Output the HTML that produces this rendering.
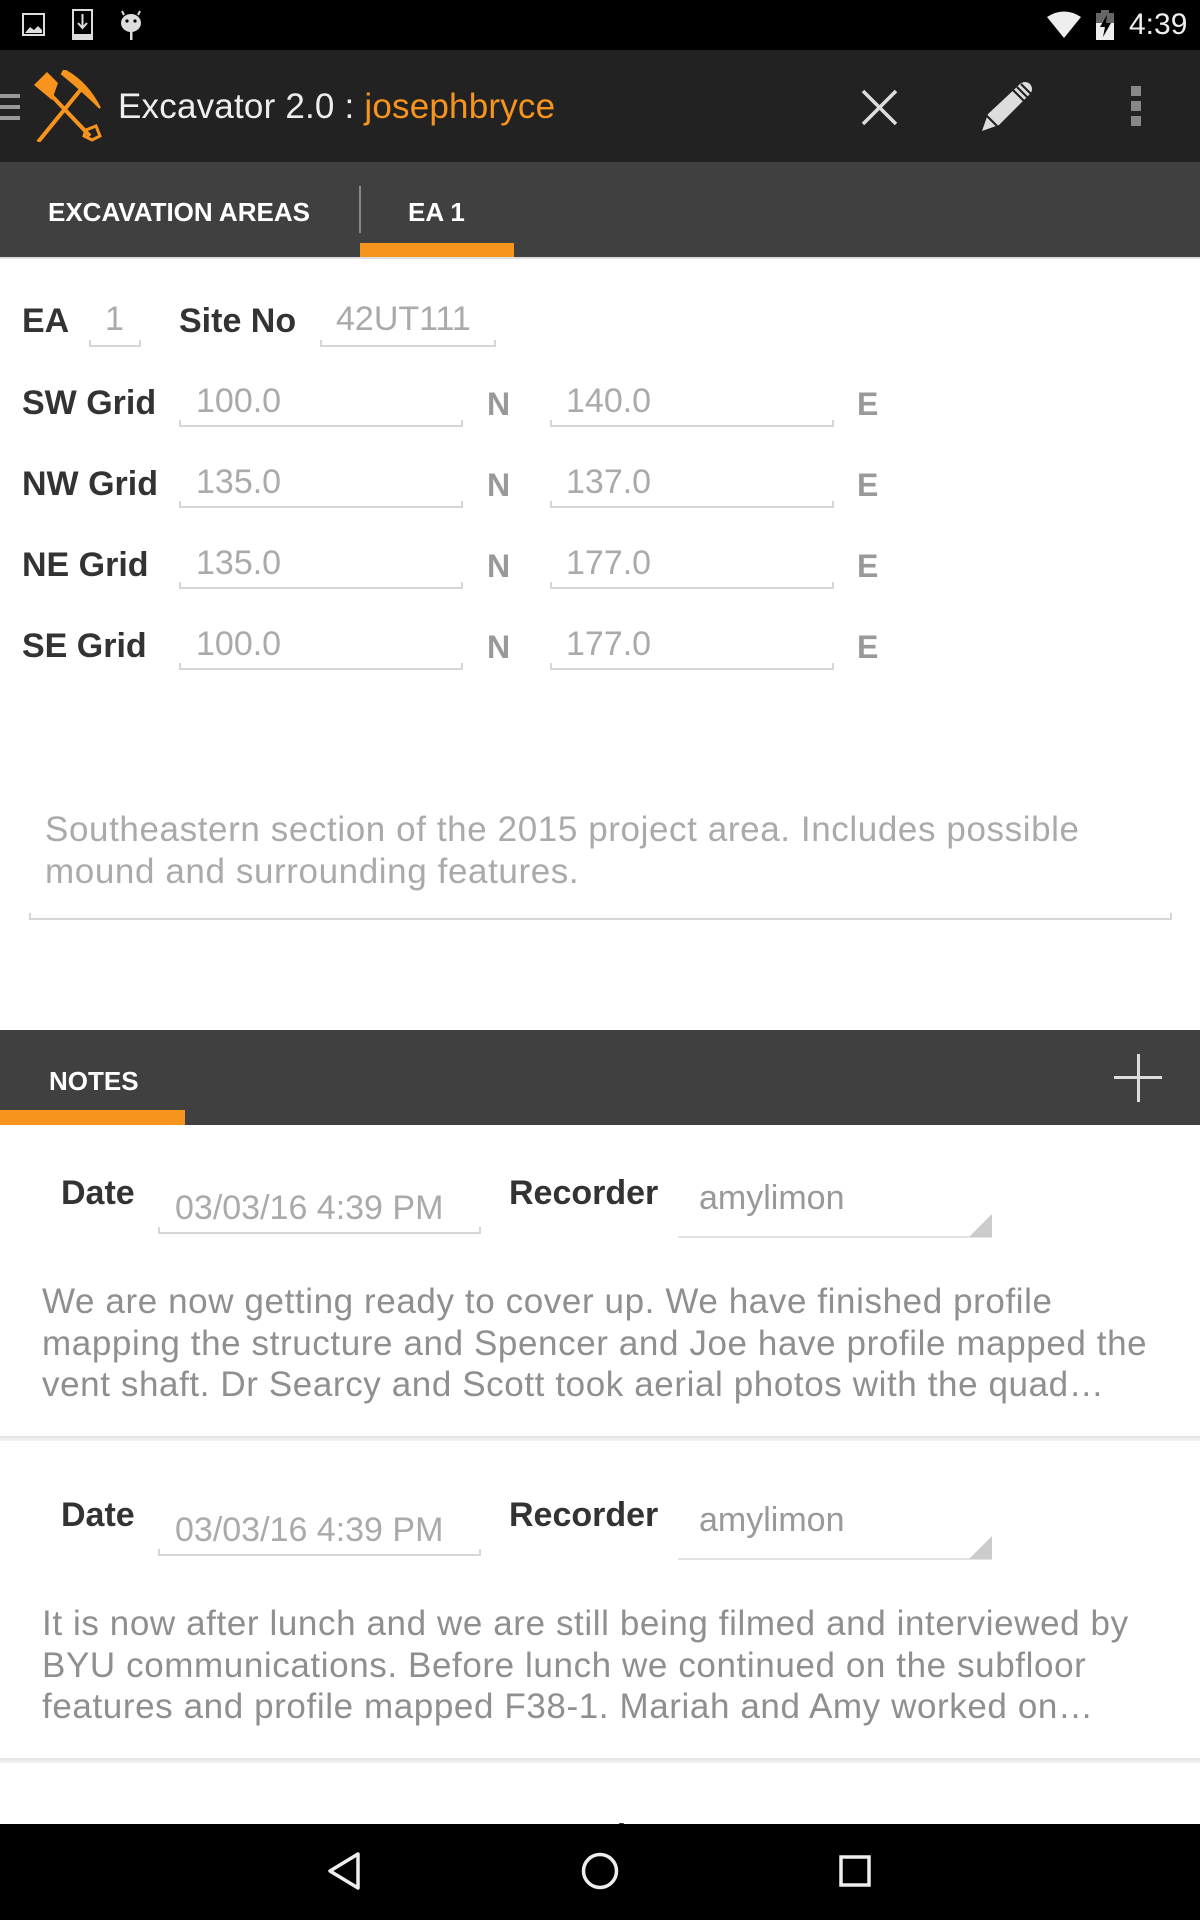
<!DOCTYPE html>
<html><head><meta charset="utf-8"><style>
*{margin:0;padding:0;box-sizing:border-box}
body{width:1200px;height:1920px;background:#fff;position:relative;overflow:hidden;font-family:"Liberation Sans",sans-serif}
.a{position:absolute;white-space:nowrap}
.lb{font-weight:bold;color:#333;font-size:34px;line-height:34px}
.v{color:#aaa;font-size:34px;line-height:34px}
.ne{font-weight:bold;color:#999;font-size:32px;line-height:32px}
.ul{position:absolute;height:2px;background:#d6d6d6}
.ul:before,.ul:after{content:"";position:absolute;bottom:0;width:2px;height:7px;background:#d6d6d6}
.ul:before{left:0}.ul:after{right:0}
.body{color:#8f8f8f;font-size:35px;line-height:41.6px;letter-spacing:0.6px}
</style></head><body>
<div class="a" style="left:0;top:0;width:1200px;height:50px;background:#000"></div>
<svg class="a" style="left:22px;top:13px" width="26" height="26" viewBox="0 0 26 26"><rect x="1" y="1" width="21" height="21" fill="none" stroke="#ddd" stroke-width="2"/><path d="M3 20 L8 14 L12 17 L16 13 L20 17 V20Z" fill="#ddd"/></svg>
<svg class="a" style="left:72px;top:9px" width="22" height="32" viewBox="0 0 22 32"><rect x="1" y="1" width="19" height="29" fill="none" stroke="#ddd" stroke-width="2"/><rect x="1" y="25" width="19" height="5" fill="#ddd"/><path d="M10.5 5 V18 M6 14 L10.5 19 L15 14" stroke="#ddd" stroke-width="2" fill="none"/></svg>
<svg class="a" style="left:118px;top:8px" width="26" height="34" viewBox="0 0 26 34"><ellipse cx="13" cy="15" rx="10" ry="9" fill="#ddd"/><path d="M6 7 L4 3 M20 7 L22 3" stroke="#ddd" stroke-width="2"/><rect x="12" y="23" width="2.5" height="9" fill="#ddd"/><circle cx="9" cy="13" r="1.6" fill="#000"/><circle cx="17" cy="13" r="1.6" fill="#000"/></svg>
<svg class="a" style="left:1046px;top:11px" width="36" height="28" viewBox="0 0 36 28"><path d="M1 6 Q18 -5 35 6 L18 27Z" fill="#eee"/></svg>
<svg class="a" style="left:1095px;top:10px" width="22" height="30" viewBox="0 0 22 30"><rect x="6" y="0" width="8" height="3" fill="#666"/><rect x="1" y="3" width="18" height="27" fill="#eee"/><rect x="1" y="3" width="18" height="10" fill="#666"/><path d="M12 5 L5 17 H10 L8 27 L16 13 H11Z" fill="#000"/></svg>
<div class="a" style="left:1129px;top:8px;font-size:30px;line-height:34px;color:#eee">4:39</div>
<div class="a" style="left:0;top:50px;width:1200px;height:112px;background:#222"></div>
<div class="a" style="left:0;top:94px;width:20px;height:4px;background:#999"></div>
<div class="a" style="left:0;top:105px;width:20px;height:4px;background:#999"></div>
<div class="a" style="left:0;top:116px;width:20px;height:4px;background:#999"></div>
<svg class="a" style="left:32px;top:70px" width="70" height="72" viewBox="0 0 70 72"><g fill="#f7941d" stroke="#f7941d"><path d="M2 15 L15 2 L26 13 L20 30 Z" stroke="none"/><path d="M19 25 L58 66" stroke-width="4" fill="none"/><path d="M54 60 L64 56 L68 66 L60 70 L52 66 Z" fill="none" stroke-width="3"/><path d="M6 72 L50 18" stroke-width="4" fill="none"/><path d="M32 0 Q55 12 68 38 Q52 22 30 4Z" stroke-width="2"/></g></svg>
<div class="a" style="left:118px;top:89px;font-size:35px;line-height:36px;color:#eee;letter-spacing:0.2px">Excavator 2.0 : <span style="color:#f7941d">josephbryce</span></div>
<svg class="a" style="left:861px;top:89px" width="37" height="37" viewBox="0 0 37 37"><path d="M2 2 L35 35 M35 2 L2 35" stroke="#ddd" stroke-width="3.5"/></svg>
<svg class="a" style="left:980px;top:78px" width="56" height="56" viewBox="0 0 56 56"><path d="M2 53 L8 36 L40 6 Q45 2 50 6 Q54 11 50 16 L19 47 Z" fill="#ddd"/><path d="M7 38 L17 48 M33 12 L44 23 M37 9 L48 20 M41 6 L51 16" stroke="#222" stroke-width="2.2"/></svg>
<div class="a" style="left:1131px;top:86px;width:10px;height:10px;background:#888"></div>
<div class="a" style="left:1131px;top:101px;width:10px;height:10px;background:#888"></div>
<div class="a" style="left:1131px;top:116px;width:10px;height:10px;background:#888"></div>
<div class="a" style="left:0;top:162px;width:1200px;height:95px;background:#404040"></div>
<div class="a" style="left:48px;top:199px;font-size:26px;font-weight:bold;color:#fff;line-height:26px">EXCAVATION AREAS</div>
<div class="a" style="left:359px;top:186px;width:2px;height:47px;background:#888"></div>
<div class="a" style="left:408px;top:199px;font-size:26px;font-weight:bold;color:#fff;line-height:26px">EA 1</div>
<div class="a" style="left:360px;top:243px;width:154px;height:14px;background:#f7941d"></div>
<div class="a" style="left:0;top:257px;width:1200px;height:2px;background:#ddd"></div>

<div class="a lb" style="left:22px;top:304px">EA</div>
<div class="a v" style="left:105px;top:302px">1</div>
<div class="ul" style="left:89px;top:345px;width:52px"></div>
<div class="a lb" style="left:179px;top:304px">Site No</div>
<div class="a v" style="left:336px;top:302px">42UT111</div>
<div class="ul" style="left:320px;top:345px;width:176px"></div>

<div class="a lb" style="left:22px;top:386px">SW Grid</div>
<div class="a v" style="left:196px;top:384px">100.0</div><div class="ul" style="left:179px;top:425px;width:284px"></div>
<div class="a ne" style="left:487px;top:388px">N</div>
<div class="a v" style="left:566px;top:384px">140.0</div><div class="ul" style="left:550px;top:425px;width:284px"></div>
<div class="a ne" style="left:857px;top:388px">E</div>

<div class="a lb" style="left:22px;top:467px">NW Grid</div>
<div class="a v" style="left:196px;top:465px">135.0</div><div class="ul" style="left:179px;top:506px;width:284px"></div>
<div class="a ne" style="left:487px;top:469px">N</div>
<div class="a v" style="left:566px;top:465px">137.0</div><div class="ul" style="left:550px;top:506px;width:284px"></div>
<div class="a ne" style="left:857px;top:469px">E</div>

<div class="a lb" style="left:22px;top:548px">NE Grid</div>
<div class="a v" style="left:196px;top:546px">135.0</div><div class="ul" style="left:179px;top:587px;width:284px"></div>
<div class="a ne" style="left:487px;top:550px">N</div>
<div class="a v" style="left:566px;top:546px">177.0</div><div class="ul" style="left:550px;top:587px;width:284px"></div>
<div class="a ne" style="left:857px;top:550px">E</div>

<div class="a lb" style="left:22px;top:629px">SE Grid</div>
<div class="a v" style="left:196px;top:627px">100.0</div><div class="ul" style="left:179px;top:668px;width:284px"></div>
<div class="a ne" style="left:487px;top:631px">N</div>
<div class="a v" style="left:566px;top:627px">177.0</div><div class="ul" style="left:550px;top:668px;width:284px"></div>
<div class="a ne" style="left:857px;top:631px">E</div>

<div class="a body" style="left:45px;top:809px;color:#aaa">Southeastern section of the 2015 project area. Includes possible<br>mound and surrounding features.</div>
<div class="ul" style="left:29px;top:918px;width:1143px"></div>

<div class="a" style="left:0;top:1030px;width:1200px;height:95px;background:#404040"></div>
<div class="a" style="left:49px;top:1068px;font-size:26px;font-weight:bold;color:#fff;line-height:26px">NOTES</div>
<div class="a" style="left:0;top:1110px;width:185px;height:15px;background:#f7941d"></div>
<div class="a" style="left:1114px;top:1076px;width:48px;height:3px;background:#ddd"></div>
<div class="a" style="left:1137px;top:1054px;width:3px;height:48px;background:#ddd"></div>

<div class="a lb" style="left:61px;top:1176px">Date</div>
<div class="a v" style="left:175px;top:1191px">03/03/16 4:39 PM</div>
<div class="ul" style="left:158px;top:1232px;width:323px"></div>
<div class="a lb" style="left:509px;top:1176px">Recorder</div>
<div class="a v" style="left:699px;top:1181px;color:#999">amylimon</div>
<div class="a" style="left:678px;top:1236px;width:314px;height:2px;background:#e4e4e4"></div>
<svg class="a" style="left:969px;top:1214px" width="23" height="23"><path d="M23 0 V23 H0Z" fill="#ccc"/></svg>
<div class="a body" style="left:42px;top:1281px">We are now getting ready to cover up. We have finished profile<br>mapping the structure and Spencer and Joe have profile mapped the<br>vent shaft. Dr Searcy and Scott took aerial photos with the quad…</div>
<div class="a" style="left:0;top:1436px;width:1200px;height:5px;background:linear-gradient(#e2e2e2,#f4f4f4)"></div>

<div class="a lb" style="left:61px;top:1498px">Date</div>
<div class="a v" style="left:175px;top:1513px">03/03/16 4:39 PM</div>
<div class="ul" style="left:158px;top:1554px;width:323px"></div>
<div class="a lb" style="left:509px;top:1498px">Recorder</div>
<div class="a v" style="left:699px;top:1503px;color:#999">amylimon</div>
<div class="a" style="left:678px;top:1558px;width:314px;height:2px;background:#e4e4e4"></div>
<svg class="a" style="left:969px;top:1536px" width="23" height="23"><path d="M23 0 V23 H0Z" fill="#ccc"/></svg>
<div class="a body" style="left:42px;top:1603px">It is now after lunch and we are still being filmed and interviewed by<br>BYU communications. Before lunch we continued on the subfloor<br>features and profile mapped F38-1. Mariah and Amy worked on…</div>
<div class="a" style="left:0;top:1758px;width:1200px;height:5px;background:linear-gradient(#e2e2e2,#f4f4f4)"></div>
<div class="a lb" style="left:61px;top:1820px">Date</div>
<div class="a lb" style="left:509px;top:1820px">Recorder</div>

<div class="a" style="left:0;top:1824px;width:1200px;height:96px;background:#000"></div>
<svg class="a" style="left:324px;top:1850px" width="40" height="42" viewBox="0 0 40 42"><path d="M34 4 L6 21 L34 38Z" fill="none" stroke="#eee" stroke-width="3.5" stroke-linejoin="round"/></svg>
<svg class="a" style="left:580px;top:1851px" width="40" height="40"><circle cx="20" cy="20" r="16.5" fill="none" stroke="#eee" stroke-width="3.5"/></svg>
<svg class="a" style="left:839px;top:1855px" width="32" height="32"><rect x="2" y="2" width="28" height="28" fill="none" stroke="#eee" stroke-width="3.5"/></svg>
</body></html>
